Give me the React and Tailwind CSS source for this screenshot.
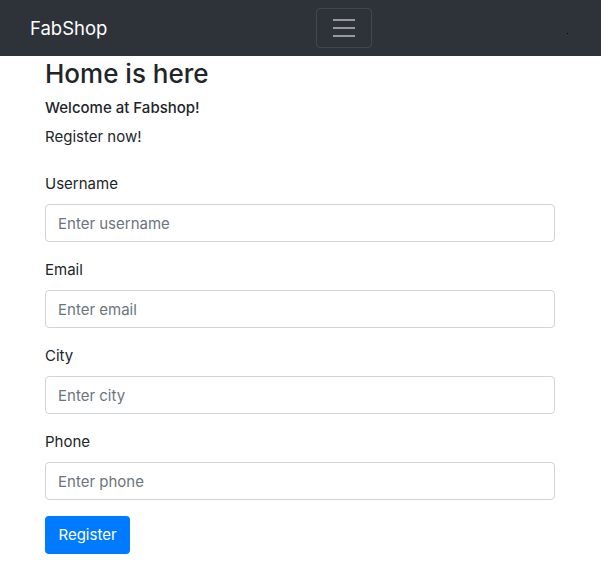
import React from 'react';

const FIELDS = [
    { label: 'Username', placeholder: 'Enter username' },
    { label: 'Email', placeholder: 'Enter email' },
    { label: 'City', placeholder: 'Enter city' },
    { label: 'Phone', placeholder: 'Enter phone' },
];

const App = () => {
    return (
        <div className="min-h-[572px] bg-white text-[#212529] font-['Inter','Liberation_Sans',sans-serif]">
            <nav className="h-[56px] bg-[#2e3239] flex items-center pl-[30px]">
                <span className="w-[286px] text-white text-[18.5px] leading-[30px]">FabShop</span>
                <button className="w-[56px] h-[40px] border border-white/10 rounded-[4px] flex items-center justify-center">
                    <svg width="30" height="30" viewBox="0 0 30 30">
                        <path d="M4 7h22M4 15h22M4 23h22" stroke="rgba(255,255,255,0.5)" strokeWidth="2" />
                    </svg>
                </button>
                <span className="ml-[195px] mt-[10px] w-[1px] h-[1px] bg-black"></span>
            </nav>

            <div className="ml-[45px] w-[510px]">
                <h3 className="pt-[2px] text-[26px] leading-[32px] font-medium mb-[8px]">Home is here</h3>
                <h6 className="text-[15px] leading-[19px] font-medium mb-[8px]">Welcome at Fabshop!</h6>
                <p className="text-[15px] leading-[24px] mb-[23px]">Register now!</p>

                <form>
                    {FIELDS.map(f => (
                        <div key={f.label} className="mb-[16px]">
                            <label className="block text-[15px] leading-[24px] mb-[8px]">{f.label}</label>
                            <input
                                type="text"
                                placeholder={f.placeholder}
                                className="block w-full h-[38px] px-[12px] text-[15px] border border-[#ced4da] rounded-[4px] placeholder:text-[#6c757d] outline-none"
                            />
                        </div>
                    ))}
                    <button type="button" className="h-[38px] w-[85px] bg-[#007bff] text-white text-[15px] rounded-[4px]">
                        Register
                    </button>
                </form>
            </div>
        </div>
    );
};

export default App;
